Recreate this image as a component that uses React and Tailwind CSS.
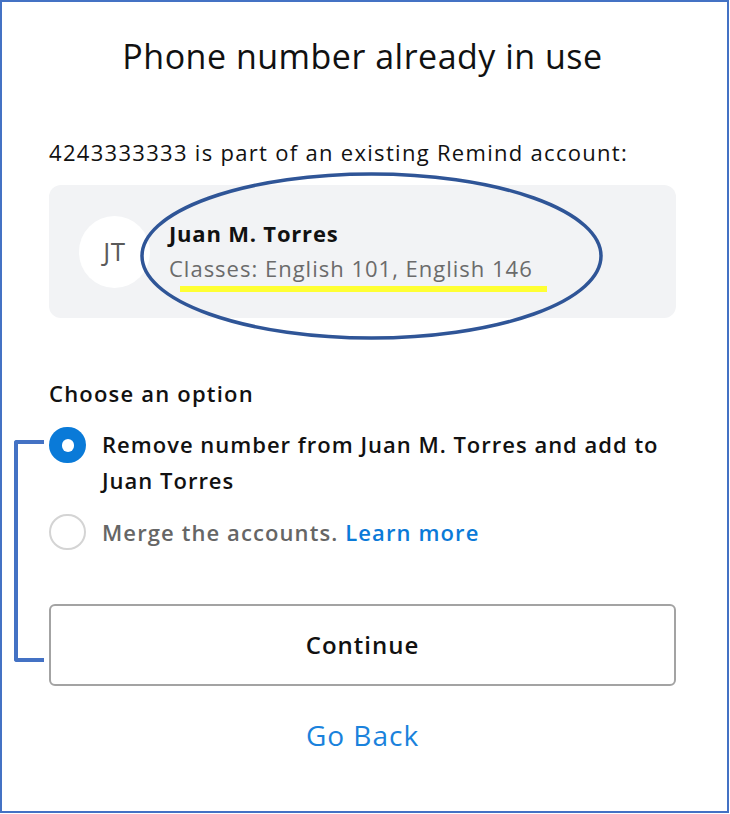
export default function App() {
  return (
    <div className="w-[730px] h-[814px] bg-white" style={{ fontFamily: '"Open Sans", "Liberation Sans", sans-serif' }}>
      <div className="relative w-[729px] h-[813px] border-2 border-[#4472c4] bg-white flex flex-col pl-[47px] pr-[51px]">
        <h1 className="mt-[34px] text-[34px] leading-[40px] tracking-[0.5px] text-center text-[#111]">Phone number already in use</h1>

        <p className="mt-[61px] text-[22px] leading-[30px] tracking-[1.3px] text-[#111]">4243333333 is part of an existing Remind account:</p>

        <div className="relative mt-[18px] h-[133px] rounded-xl bg-[#f2f3f5] flex items-center px-[30px] gap-[19px]">
          <div className="w-[71px] h-[72px] rounded-full bg-white flex items-center justify-center text-[26px] tracking-[0.5px] text-[#5a5a5a]">JT</div>
          <div className="flex flex-col gap-[5px] -mt-[2px]">
            <div className="text-[22px] leading-[30px] tracking-[0.8px] font-bold text-[#111]">Juan M. Torres</div>
            <div className="text-[22px] leading-[30px] tracking-[1px] text-[#6b6b6b]">Classes: English 101, English 146</div>
          </div>
          <div className="absolute left-[131px] top-[101px] w-[367px] h-[6px] bg-[#ffff33]" />
          <svg className="absolute left-[91px] -top-[14px]" width="463" height="170" viewBox="0 0 463 170">
            <ellipse cx="231.5" cy="85" rx="229.5" ry="82" fill="none" stroke="#2f5597" strokeWidth="3.5" />
          </svg>
        </div>

        <p className="mt-[60px] text-[22px] leading-[30px] tracking-[1.2px] font-semibold text-[#111]">Choose an option</p>

        <label className="mt-[18px] flex items-start gap-[16px]">
          <span className="mt-[1px] shrink-0 w-[37px] h-[36px] rounded-full bg-[#0a7ad8] flex items-center justify-center">
            <span className="w-[12px] h-[13px] rounded-full bg-white" />
          </span>
          <span className="text-[22px] leading-[36px] tracking-[1px] font-semibold text-[#111]">
            Remove number from Juan M. Torres and add to Juan Torres
          </span>
        </label>

        <label className="mt-[16px] flex items-center gap-[16px]">
          <span className="shrink-0 w-[37px] h-[36px] rounded-full border-2 border-[#d4d4d4] bg-white" />
          <span className="text-[22px] leading-[36px] tracking-[1.1px] font-semibold text-[#666]">
            Merge the accounts. <span className="text-[#0a7ad8]">Learn more</span>
          </span>
        </label>

        <button className="mt-[54px] h-[82px] rounded-md border-2 border-[#a3a3a3] bg-white text-[24px] tracking-[1px] font-semibold text-[#111]">
          Continue
        </button>

        <a className="mt-[32px] text-center text-[28px] leading-[34px] tracking-[1px] text-[#1a82dc]">Go Back</a>

        <div className="absolute left-[12px] top-[438px] w-[30px] h-[222px] border-l-[4px] border-t-[4px] border-b-[4px] border-[#4472c4] rounded-l-[3px]" />
      </div>
    </div>
  )
}
